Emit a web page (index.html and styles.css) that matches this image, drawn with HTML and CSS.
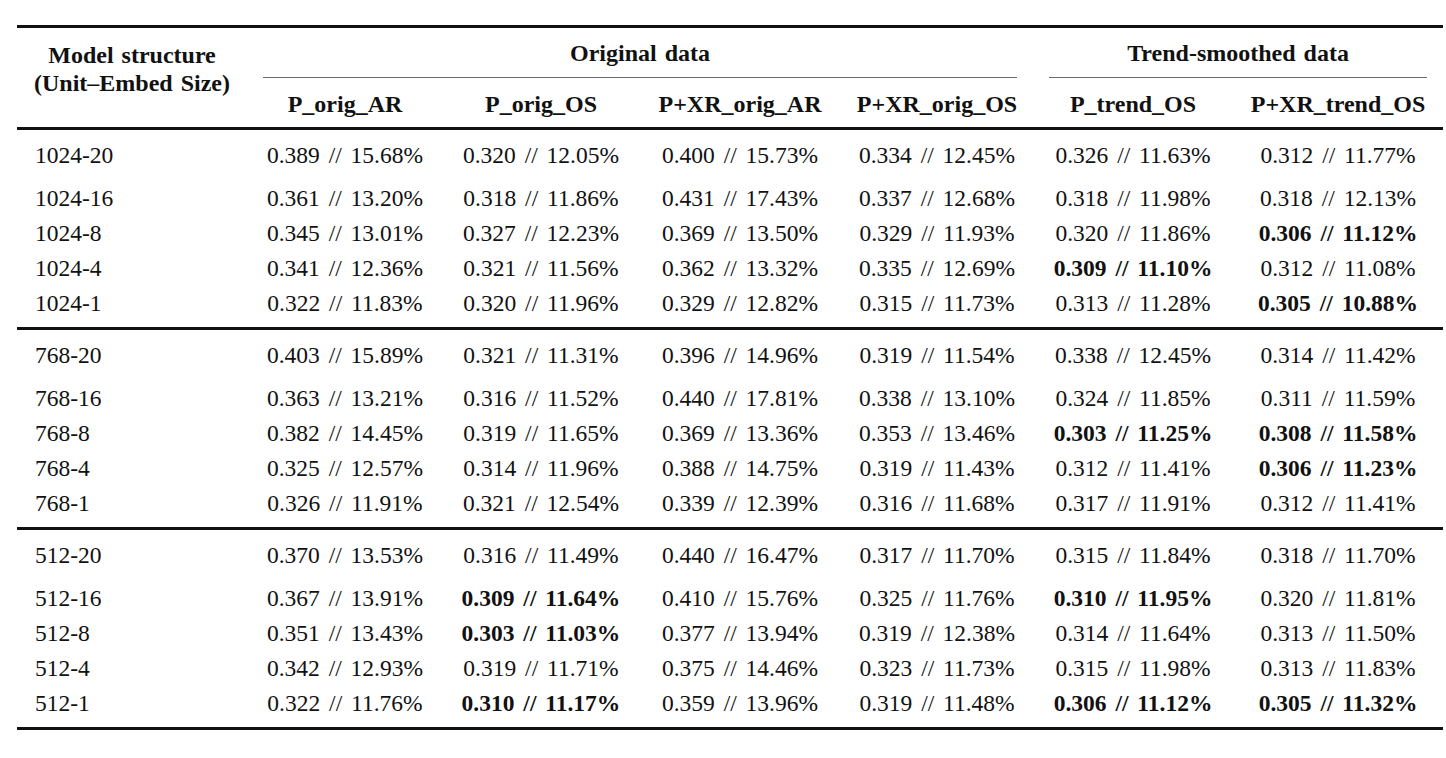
FILE: index.html
```html
<!DOCTYPE html>
<html>
<head>
<meta charset="utf-8">
<link rel="stylesheet" href="styles.css">
</head>
<body>
<table class="results">
  <colgroup>
    <col class="c0"><col class="c1"><col class="c2"><col class="c3"><col class="c4"><col class="c5"><col class="c6">
  </colgroup>
  <thead>
    <tr class="h1">
      <th rowspan="2" class="model">Model structure<br>(Unit–Embed Size)</th>
      <th colspan="4"><div class="grp">Original data</div></th>
      <th colspan="2"><div class="grp">Trend-smoothed data</div></th>
    </tr>
    <tr class="h2">
      <th>P_orig_AR</th>
      <th>P_orig_OS</th>
      <th>P+XR_orig_AR</th>
      <th>P+XR_orig_OS</th>
      <th>P_trend_OS</th>
      <th>P+XR_trend_OS</th>
    </tr>
  </thead>
  <tbody>
    <tr class="first"><td>1024-20</td><td>0.389 // 15.68%</td><td>0.320 // 12.05%</td><td>0.400 // 15.73%</td><td>0.334 // 12.45%</td><td>0.326 // 11.63%</td><td>0.312 // 11.77%</td></tr>
    <tr><td>1024-16</td><td>0.361 // 13.20%</td><td>0.318 // 11.86%</td><td>0.431 // 17.43%</td><td>0.337 // 12.68%</td><td>0.318 // 11.98%</td><td>0.318 // 12.13%</td></tr>
    <tr><td>1024-8</td><td>0.345 // 13.01%</td><td>0.327 // 12.23%</td><td>0.369 // 13.50%</td><td>0.329 // 11.93%</td><td>0.320 // 11.86%</td><td class="b">0.306 // 11.12%</td></tr>
    <tr><td>1024-4</td><td>0.341 // 12.36%</td><td>0.321 // 11.56%</td><td>0.362 // 13.32%</td><td>0.335 // 12.69%</td><td class="b">0.309 // 11.10%</td><td>0.312 // 11.08%</td></tr>
    <tr class="last"><td>1024-1</td><td>0.322 // 11.83%</td><td>0.320 // 11.96%</td><td>0.329 // 12.82%</td><td>0.315 // 11.73%</td><td>0.313 // 11.28%</td><td class="b">0.305 // 10.88%</td></tr>
  </tbody>
  <tbody>
    <tr class="first"><td>768-20</td><td>0.403 // 15.89%</td><td>0.321 // 11.31%</td><td>0.396 // 14.96%</td><td>0.319 // 11.54%</td><td>0.338 // 12.45%</td><td>0.314 // 11.42%</td></tr>
    <tr><td>768-16</td><td>0.363 // 13.21%</td><td>0.316 // 11.52%</td><td>0.440 // 17.81%</td><td>0.338 // 13.10%</td><td>0.324 // 11.85%</td><td>0.311 // 11.59%</td></tr>
    <tr><td>768-8</td><td>0.382 // 14.45%</td><td>0.319 // 11.65%</td><td>0.369 // 13.36%</td><td>0.353 // 13.46%</td><td class="b">0.303 // 11.25%</td><td class="b">0.308 // 11.58%</td></tr>
    <tr><td>768-4</td><td>0.325 // 12.57%</td><td>0.314 // 11.96%</td><td>0.388 // 14.75%</td><td>0.319 // 11.43%</td><td>0.312 // 11.41%</td><td class="b">0.306 // 11.23%</td></tr>
    <tr class="last"><td>768-1</td><td>0.326 // 11.91%</td><td>0.321 // 12.54%</td><td>0.339 // 12.39%</td><td>0.316 // 11.68%</td><td>0.317 // 11.91%</td><td>0.312 // 11.41%</td></tr>
  </tbody>
  <tbody>
    <tr class="first"><td>512-20</td><td>0.370 // 13.53%</td><td>0.316 // 11.49%</td><td>0.440 // 16.47%</td><td>0.317 // 11.70%</td><td>0.315 // 11.84%</td><td>0.318 // 11.70%</td></tr>
    <tr><td>512-16</td><td>0.367 // 13.91%</td><td class="b">0.309 // 11.64%</td><td>0.410 // 15.76%</td><td>0.325 // 11.76%</td><td class="b">0.310 // 11.95%</td><td>0.320 // 11.81%</td></tr>
    <tr><td>512-8</td><td>0.351 // 13.43%</td><td class="b">0.303 // 11.03%</td><td>0.377 // 13.94%</td><td>0.319 // 12.38%</td><td>0.314 // 11.64%</td><td>0.313 // 11.50%</td></tr>
    <tr><td>512-4</td><td>0.342 // 12.93%</td><td>0.319 // 11.71%</td><td>0.375 // 14.46%</td><td>0.323 // 11.73%</td><td>0.315 // 11.98%</td><td>0.313 // 11.83%</td></tr>
    <tr class="last"><td>512-1</td><td>0.322 // 11.76%</td><td class="b">0.310 // 11.17%</td><td>0.359 // 13.96%</td><td>0.319 // 11.48%</td><td class="b">0.306 // 11.12%</td><td class="b">0.305 // 11.32%</td></tr>
  </tbody>
</table>
</body>
</html>
```

FILE: styles.css
```css
html, body {
  margin: 0;
  padding: 0;
  background: #ffffff;
}

body {
  padding: 25px 3px 0 17px;
  font-family: "Liberation Serif", "Times New Roman", serif;
  color: #111111;
}

.results {
  width: 1426px;
  table-layout: fixed;
  border-collapse: separate;
  border-spacing: 0;
}

.c0 { width: 230px; }
.c1 { width: 196px; }
.c2 { width: 196px; }
.c3 { width: 202px; }
.c4 { width: 192px; }
.c5 { width: 200px; }
.c6 { width: 210px; }

th {
  font-weight: bold;
  font-size: 24px;
  text-align: center;
  padding: 0;
  white-space: nowrap;
  word-spacing: 2px;
}

.h1 th {
  border-top: 3px solid #111111;
}

.model {
  vertical-align: top;
  padding-top: 13px;
  line-height: 28px;
  border-bottom: 3px solid #111111;
}

.grp {
  margin: 0 16px;
  padding-top: 2px;
  line-height: 47px;
  border-bottom: 1px solid #6a6a6a;
}

.h2 th {
  padding-top: 3px;
  line-height: 46px;
  border-bottom: 3px solid #111111;
}

td {
  font-size: 23.5px;
  line-height: 35px;
  padding: 0;
  text-align: center;
  white-space: nowrap;
  word-spacing: 3px;
}

td:first-child {
  text-align: left;
  padding-left: 18px;
  word-spacing: 0;
}

.first td {
  padding-top: 8px;
  padding-bottom: 8px;
}

.last td {
  padding-bottom: 6px;
  border-bottom: 3px solid #111111;
}

td.b {
  font-weight: bold;
}
```
